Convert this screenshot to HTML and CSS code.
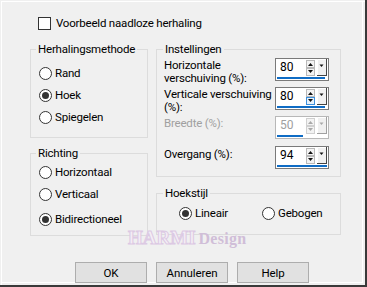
FILE: index.html
```html
<!DOCTYPE html>
<html lang="nl">
<head>
<meta charset="utf-8">
<link rel="stylesheet" href="styles.css">
</head>
<body>
<div class="dialog">
  <div class="check-row"><span class="checkbox"></span><span>Voorbeeld naadloze herhaling</span></div>
  <div class="main">
    <div class="col left">
      <fieldset class="group method">
        <legend>Herhalingsmethode</legend>
        <div class="radio"><span class="dot"></span>Rand</div>
        <div class="radio"><span class="dot on"></span>Hoek</div>
        <div class="radio"><span class="dot"></span>Spiegelen</div>
      </fieldset>
      <fieldset class="group dir">
        <legend>Richting</legend>
        <div class="radio"><span class="dot"></span>Horizontaal</div>
        <div class="radio"><span class="dot"></span>Verticaal</div>
        <div class="radio last"><span class="dot on"></span>Bidirectioneel</div>
      </fieldset>
    </div>
    <div class="col right">
      <fieldset class="group settings">
        <legend>Instellingen</legend>
        <div class="row">
          <div class="lbl"><span class="ln">Horizontale</span><span class="ln">verschuiving (%):</span></div>
          <div class="spin">
            <div class="spin-top">
              <span class="val">80</span>
              <svg class="arrows" width="9" height="16" viewBox="0 0 9 16"><rect x="0.5" y="0.5" width="8" height="7" fill="#f3f3f3" stroke="#b9b9b9"/><rect x="0.5" y="8.5" width="8" height="7" fill="#f3f3f3" stroke="#b9b9b9"/><path d="M2 6h5L4.5 3z" fill="#111"/><path d="M2 10h5l-2.5 3z" fill="#111"/></svg>
              <svg class="drop" width="10" height="17" viewBox="0 0 10 17"><rect width="10" height="17" fill="#f0f0f0"/><path d="M0.5 16V0.5H9" fill="none" stroke="#fff"/><path d="M9.5 0v17M0 16.5h10" stroke="#444"/><path d="M2.5 5.5h4l-2 2.5z" fill="#111"/></svg>
            </div>
            <div class="bar" style="width:48px"></div>
          </div>
        </div>
        <div class="row">
          <div class="lbl"><span class="ln">Verticale verschuiving</span><span class="ln">(%):</span></div>
          <div class="spin">
            <div class="spin-top">
              <span class="val">80</span>
              <svg class="arrows" width="9" height="16" viewBox="0 0 9 16"><rect x="0.5" y="0.5" width="8" height="7" fill="#f3f3f3" stroke="#b9b9b9"/><rect x="0.5" y="8.5" width="8" height="7" fill="#e5f1fb" stroke="#3c8fdc"/><path d="M2 6h5L4.5 3z" fill="#111"/><path d="M2 10h5l-2.5 3z" fill="#111"/></svg>
              <svg class="drop" width="10" height="17" viewBox="0 0 10 17"><rect width="10" height="17" fill="#f0f0f0"/><path d="M0.5 16V0.5H9" fill="none" stroke="#fff"/><path d="M9.5 0v17M0 16.5h10" stroke="#444"/><path d="M2.5 5.5h4l-2 2.5z" fill="#111"/></svg>
            </div>
            <div class="bar" style="width:48px"></div>
          </div>
        </div>
        <div class="row disabled">
          <div class="lbl">Breedte (%):</div>
          <div class="spin">
            <div class="spin-top">
              <span class="val">50</span>
              <svg class="arrows" width="9" height="16" viewBox="0 0 9 16"><rect x="0.5" y="0.5" width="8" height="7" fill="#f3f3f3" stroke="#d0d0d0"/><rect x="0.5" y="8.5" width="8" height="7" fill="#f3f3f3" stroke="#d0d0d0"/><path d="M2 6h5L4.5 3z" fill="#a8a8a8"/><path d="M2 10h5l-2.5 3z" fill="#a8a8a8"/></svg>
              <svg class="drop" width="10" height="17" viewBox="0 0 10 17"><rect width="10" height="17" fill="#f0f0f0"/><path d="M0.5 16V0.5H9" fill="none" stroke="#fff"/><path d="M9.5 0v17M0 16.5h10" stroke="#a0a0a0"/><path d="M2.5 5.5h4l-2 2.5z" fill="#a8a8a8"/></svg>
            </div>
            <div class="bar" style="width:26px"></div>
          </div>
        </div>
        <div class="row last">
          <div class="lbl">Overgang (%):</div>
          <div class="spin">
            <div class="spin-top">
              <span class="val">94</span>
              <svg class="arrows" width="9" height="16" viewBox="0 0 9 16"><rect x="0.5" y="0.5" width="8" height="7" fill="#f3f3f3" stroke="#b9b9b9"/><rect x="0.5" y="8.5" width="8" height="7" fill="#f3f3f3" stroke="#b9b9b9"/><path d="M2 6h5L4.5 3z" fill="#111"/><path d="M2 10h5l-2.5 3z" fill="#111"/></svg>
              <svg class="drop" width="10" height="17" viewBox="0 0 10 17"><rect width="10" height="17" fill="#f0f0f0"/><path d="M0.5 16V0.5H9" fill="none" stroke="#fff"/><path d="M9.5 0v17M0 16.5h10" stroke="#444"/><path d="M2.5 5.5h4l-2 2.5z" fill="#111"/></svg>
            </div>
            <div class="bar" style="width:50px"></div>
          </div>
        </div>
      </fieldset>
      <fieldset class="group corner">
        <legend>Hoekstijl</legend>
        <div class="radios">
          <div class="radio first"><span class="dot on"></span>Lineair</div>
          <div class="radio"><span class="dot"></span>Gebogen</div>
        </div>
      </fieldset>
    </div>
  </div>
  <div class="buttons">
    <button class="btn">OK</button>
    <button class="btn">Annuleren</button>
    <button class="btn">Help</button>
  </div>
  <div class="watermark"><span class="wm-harmi">HARMI</span> <span class="wm-design">Design</span></div>
</div>
</body>
</html>
```
FILE: styles.css
```css
html, body {
  margin: 0;
  padding: 0;
  background: #f0f0f0;
}
body {
  font-family: Roboto, "Noto Sans", sans-serif;
  font-size: 11.5px;
  letter-spacing: -0.2px;
  color: #000;
}
.dialog {
  position: relative;
  box-sizing: border-box;
  width: 367px;
  height: 287px;
  padding: 15px 0 0 30px;
  border-right: 2px solid #3a3a3a;
  border-bottom: 2px solid #3a3a3a;
  box-shadow: inset 1px 1px 0 #f0f0f0, inset 2px 2px 0 #fff, inset -2px -2px 0 #f0f0f0, inset -3px -3px 0 #fff;
}
.check-row {
  display: flex;
  align-items: center;
  gap: 5px;
  margin-left: 8px;
  height: 16px;
  line-height: 16px;
}
.checkbox {
  width: 13px;
  height: 13px;
  box-sizing: border-box;
  border: 1px solid #333;
  background: #fff;
}
.main {
  display: grid;
  grid-template-columns: 118px 185px;
  column-gap: 8px;
  margin-top: 10px;
  align-items: start;
  height: 195px;
}
.col {
  display: flex;
  flex-direction: column;
}
.col.left { gap: 7px; }
.col.right { gap: 8px; }
fieldset.group {
  margin: 0;
  min-width: 0;
  border: 1px solid #dcdcdc;
  box-sizing: border-box;
}
legend {
  font-size: 11.5px;
  line-height: 16px;
  padding: 0 2px;
}
.method {
  padding: 5px 8px 9px 8px;
}
.method legend, .dir legend { margin-left: -3px; }
.dir {
  padding: 0 8px 5px 8px;
}
.radio {
  display: flex;
  align-items: center;
  gap: 3px;
  height: 22px;
  line-height: 16px;
}
.dir .radio.last { margin-top: 3px; }
.dot {
  width: 13px;
  height: 13px;
  box-sizing: border-box;
  border: 1px solid #333;
  border-radius: 50%;
  background: #fff;
  display: grid;
  place-items: center;
  flex: none;
}
.dot.on::after {
  content: "";
  width: 7px;
  height: 7px;
  border-radius: 50%;
  background: #333;
}
.settings {
  padding: 1px 11px 7px 7px;
  display: flex;
  flex-direction: column;
}
.settings legend, .corner legend { margin-left: -1px; }
.row {
  display: flex;
  justify-content: space-between;
  align-items: flex-start;
  height: 23px;
}
.row + .row { margin-top: 6px; }
.row.last { margin-top: 7px; }
.lbl {
  display: flex;
  flex-direction: column;
  line-height: 13px;
  padding-top: 1px;
  white-space: nowrap;
}
.ln {
  display: block;
  height: 13px;
}
.row.last .lbl { padding-top: 2px; }
.disabled .lbl, .disabled .val { color: #a0a0a0; }
.spin {
  width: 54px;
  height: 23px;
  flex: none;
  box-sizing: border-box;
  border: 1px solid #7a7a7a;
  background: #fff;
  display: flex;
  flex-direction: column;
  padding: 0 1px 1px 1px;
}
.disabled .spin { border-color: #b8b8b8; }
.spin-top {
  display: flex;
  align-items: flex-start;
  height: 17px;
}
.val {
  box-sizing: border-box;
  width: 30px;
  padding-left: 3px;
  line-height: 17px;
  font-size: 12px;
  letter-spacing: 0;
}
.arrows {
  display: block;
  margin-top: 1px;
  flex: none;
}
.drop {
  display: block;
  margin-left: 2px;
  flex: none;
}
.bar {
  height: 3px;
  margin-top: 1px;
  background: #0f6cc5;
}
.corner {
  padding: 1px 7px 10px 7px;
}
.radios {
  display: flex;
  padding-left: 15px;
}
.radios .radio.first { width: 83px; }
.buttons {
  display: flex;
  gap: 9px;
  margin: 26px 0 0 45px;
}
.btn {
  width: 72px;
  height: 21px;
  box-sizing: border-box;
  border: 1px solid #adadad;
  background: #e1e1e1;
  font-family: Roboto, "Noto Sans", sans-serif;
  font-size: 11.5px;
  letter-spacing: -0.1px;
  color: #000;
  padding: 0;
  line-height: 18px;
}
.watermark {
  position: absolute;
  left: 128px;
  top: 227px;
  white-space: nowrap;
  font-family: "Liberation Serif", serif;
  font-weight: bold;
  letter-spacing: 0;
}
.wm-harmi {
  font-size: 19px;
  color: #f4eef6;
  -webkit-text-stroke: 1px #dcc9e3;
  letter-spacing: 0;
}
.wm-design {
  font-size: 16px;
  color: #d0bed8;
  letter-spacing: 0.3px;
}
```
